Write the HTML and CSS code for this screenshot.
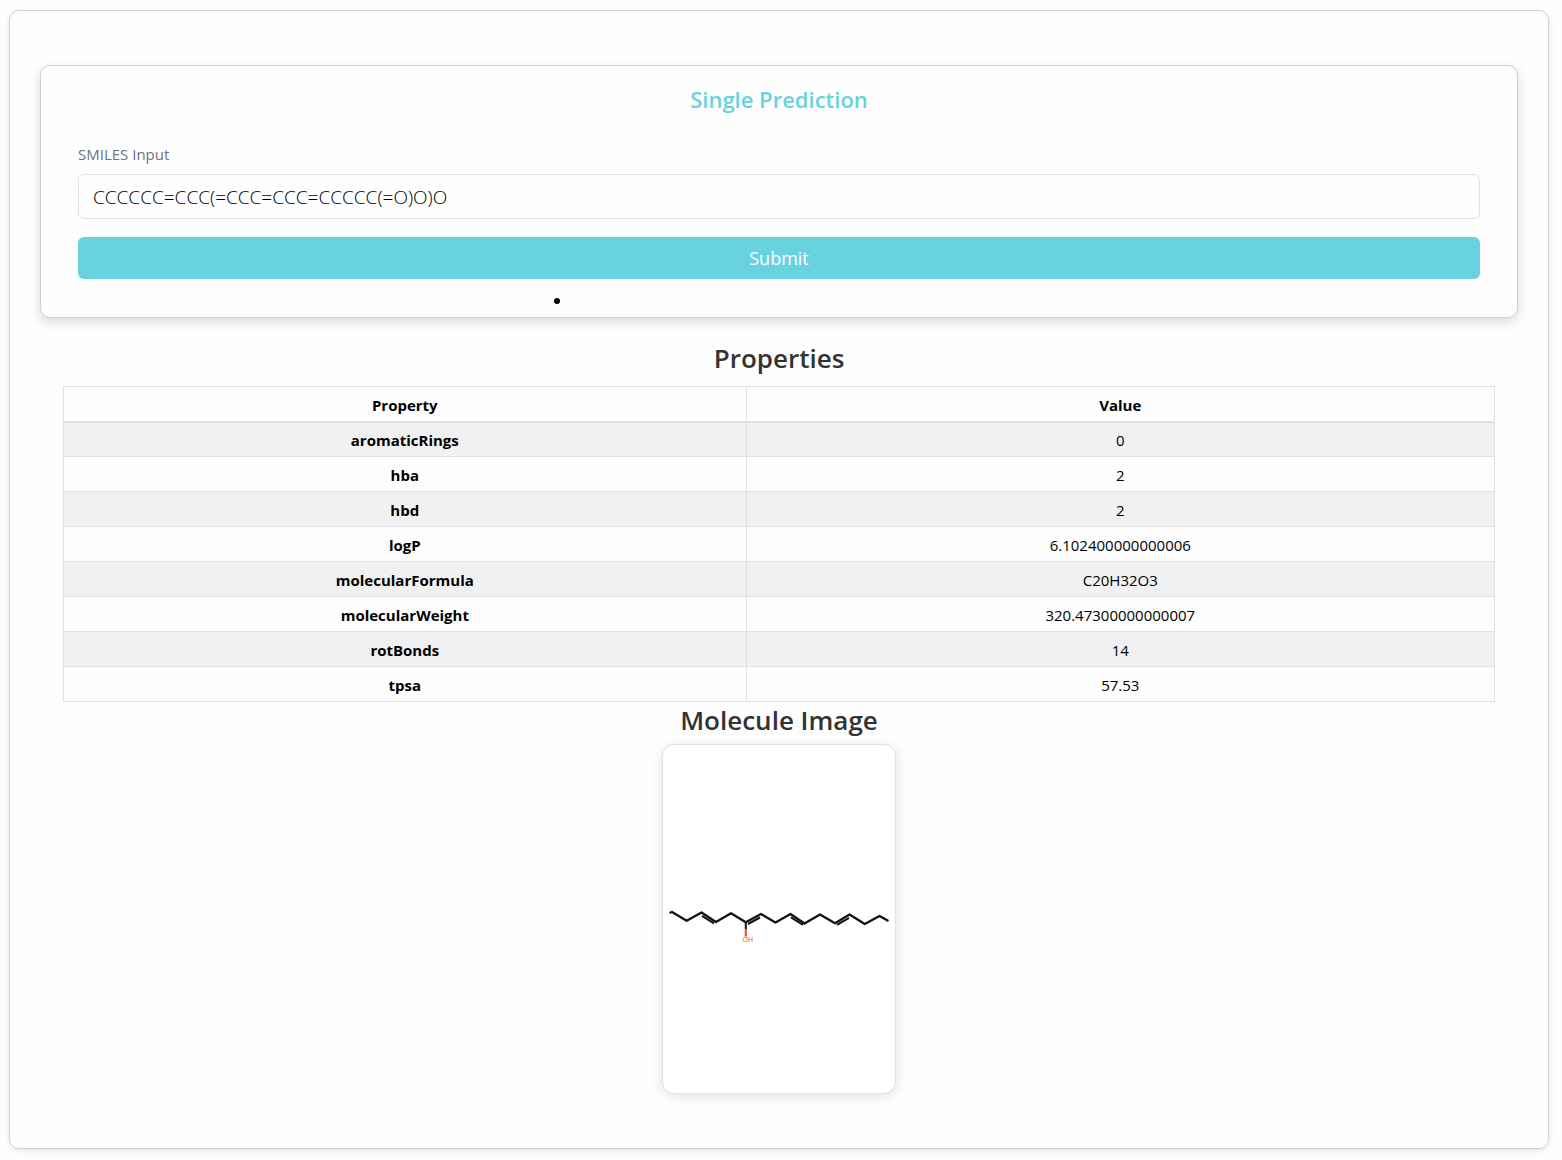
FILE: index.html
```html
<!DOCTYPE html>
<html lang="en">
<head>
<meta charset="utf-8">
<meta name="viewport" content="width=device-width, initial-scale=1">
<title>Single Prediction</title>
<link rel="stylesheet" href="styles.css">
</head>
<body>
<main class="page">
  <form class="card">
    <h2 class="card-title">Single Prediction</h2>
    <label class="label" for="smiles">SMILES Input</label>
    <input class="input" id="smiles" type="text" value="CCCCCC=CCC(=CCC=CCC=CCCCC(=O)O)O">
    <button class="submit" type="button">Submit</button>
    <ul class="messages"><li></li></ul>
  </form>
  <section class="results">
    <h3 class="heading">Properties</h3>
    <table class="table">
      <colgroup><col class="col-name"><col></colgroup>
      <thead><tr><th scope="col">Property</th><th scope="col">Value</th></tr></thead>
      <tbody>
        <tr><th scope="row">aromaticRings</th><td>0</td></tr>
        <tr><th scope="row">hba</th><td>2</td></tr>
        <tr><th scope="row">hbd</th><td>2</td></tr>
        <tr><th scope="row">logP</th><td>6.102400000000006</td></tr>
        <tr><th scope="row">molecularFormula</th><td>C20H32O3</td></tr>
        <tr><th scope="row">molecularWeight</th><td>320.47300000000007</td></tr>
        <tr><th scope="row">rotBonds</th><td>14</td></tr>
        <tr><th scope="row">tpsa</th><td>57.53</td></tr>
      </tbody>
    </table>
    <h3 class="heading">Molecule Image</h3>
    <figure class="molecule">
      <svg viewBox="669 750 219 338" role="img" aria-label="Molecule structure">
        <g fill="none" stroke="#111" stroke-width="2.300" stroke-linejoin="round">
          <path d="M669 913L671.500 912L686.200 920.800L701 912.500L715.500 922L730.500 913.300L745.300 922.300L760.500 914L775 922.500L790 914L804 923.500L819.500 914.500L834.500 923.300L849 914.500L864.300 924L879 916L888 921"/>
          <path d="M701.500 915.800L713.500 923.300M747.500 924L759.500 917.500M790.500 917.300L802.500 924.800M836.500 924.800L848.500 917.800" stroke-width="2"/>
        </g>
        <path d="M745.300 922.500V929" stroke="#111" stroke-width="2"/>
        <path d="M745.300 929V936.500" stroke="#ff4a44" stroke-width="2.200"/>
        <text class="atom" x="742" y="942">OH</text>
      </svg>
    </figure>
  </section>
</main>
</body>
</html>
```

FILE: styles.css
```css
* { box-sizing: border-box; }

body {
  margin: 0;
  padding: 10px 13px 11px 9px;
  background: #fefefe;
  color: #000;
  font-family: "Segoe UI", "Open Sans", "Noto Sans", sans-serif;
  font-size: 15px;
}

.page {
  padding: 54px 30px;
  border: 1px solid #d0d0d0;
  border-radius: 10px;
  box-shadow: 0 2px 6px rgba(0, 0, 0, 0.1);
}

.card {
  display: flex;
  flex-direction: column;
  padding: 17px 37px 5px;
  border: 1px solid #d0d0d0;
  border-radius: 10px;
  box-shadow: 0 4px 12px rgba(0, 0, 0, 0.15);
  background: #fefefe;
}

.card-title {
  margin: 0 0 28px;
  color: #69d2df;
  font-size: 22px;
  font-weight: 600;
  line-height: 32px;
  text-align: center;
}

.label {
  margin-bottom: 9px;
  color: #6c757d;
  line-height: 22px;
}

.input {
  height: 45px;
  padding: 0 14px;
  border: 1px solid #dee2e6;
  border-radius: 6px;
  background: #fefefe;
  color: #000;
  font: 300 19px "Segoe UI", "Open Sans", "Noto Sans", sans-serif;
}

.submit {
  height: 42px;
  margin-top: 18px;
  border: 0;
  border-radius: 6px;
  background: #69d2df;
  color: #fff;
  font: 400 18px "Segoe UI", "Open Sans", "Noto Sans", sans-serif;
}

.messages {
  margin: 9px 0 0 35%;
  padding: 0 0 0 4px;
  font-size: 18px;
  line-height: 24px;
}

.results { padding: 22px 23px 0; }

.heading {
  margin: 0;
  color: #333;
  font-size: 26px;
  font-weight: 600;
  line-height: 36px;
  text-align: center;
}

.table {
  width: 100%;
  margin-top: 10px;
  border-collapse: collapse;
  table-layout: fixed;
  text-align: center;
}

.col-name { width: 47.7%; }

.table th,
.table td {
  height: 35px;
  padding: 2px 8px 0;
  border: 1px solid #dee2e6;
  line-height: 22px;
}

.table thead th { border-bottom-width: 2px; }

.table tbody tr:nth-child(odd) { background: #f1f1f1; }

.molecule {
  width: 234px;
  height: 350px;
  margin: 6px auto 0;
  padding: 5px 6px;
  border: 1px solid #dee2e6;
  border-radius: 12px;
  background: #fff;
  box-shadow: 0 2px 12px rgba(0, 0, 0, 0.12);
}

.molecule svg {
  display: block;
  width: 100%;
  height: 100%;
}

.atom {
  fill: #ff4a44;
  font: 7px "Liberation Sans", Arial, sans-serif;
}
```
